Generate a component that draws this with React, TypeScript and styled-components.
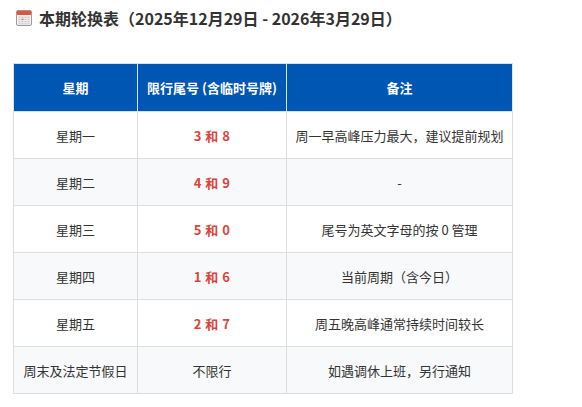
import React from "react";
import styled, { createGlobalStyle } from "styled-components";

const GlobalStyle = createGlobalStyle`
  body {
    margin: 0;
    background: #ffffff;
    font-family: "Noto Sans CJK SC", "Noto Sans", sans-serif;
    color: #333;
  }
`;

const Page = styled.div`
  width: 582px;
  height: 407px;
  padding: 7px 0 0 13px;
  box-sizing: border-box;
`;

const Heading = styled.h3`
  display: flex;
  align-items: center;
  gap: 7px;
  margin: 0 0 34px 3px;
  font-size: 16px;
  font-weight: 700;
  color: #333;
  line-height: 22px;
`;

const Table = styled.table`
  width: 499px;
  border-collapse: collapse;
  font-size: 13px;
  table-layout: fixed;
`;

const HeadCell = styled.th`
  background: #0056b3;
  color: #fff;
  font-weight: 700;
  height: 47px;
  padding: 0;
  border: 1px solid #cfe3f5;
  text-align: center;
`;

const Row = styled.tr<{ $alt: boolean }>`
  background: ${(p) => (p.$alt ? "#f8f9fa" : "#ffffff")};
`;

const Cell = styled.td<{ $red?: boolean }>`
  height: 46px;
  padding: 0;
  border: 1px solid #dddddd;
  text-align: center;
  color: ${(p) => (p.$red ? "#d9453d" : "#333")};
  font-weight: ${(p) => (p.$red ? 700 : 400)};
  letter-spacing: ${(p) => (p.$red ? "0.5px" : "0")};
`;

const CalendarIcon = () => (
  <svg width="16" height="16" viewBox="0 0 16 16">
    <rect x="0.5" y="0.5" width="15" height="15" rx="1.5" fill="#f4f4f4" stroke="#9a9a9a" />
    <rect x="1" y="1" width="14" height="4" fill="#e4553f" />
    {[0, 1, 2, 3].map((r) =>
      [0, 1, 2, 3].map((c) => (
        <rect key={`${r}-${c}`} x={2.5 + c * 3} y={6.5 + r * 2.2} width="2" height="1.4" fill="#c8c8c8" />
      ))
    )}
    <rect x="5.5" y="8.7" width="2" height="1.4" fill="#e07a8a" />
  </svg>
);

const rows = [
  { day: "星期一", nums: "3 和 8", note: "周一早高峰压力最大，建议提前规划", red: true },
  { day: "星期二", nums: "4 和 9", note: "-", red: true },
  { day: "星期三", nums: "5 和 0", note: "尾号为英文字母的按 0 管理", red: true },
  { day: "星期四", nums: "1 和 6", note: "当前周期（含今日）", red: true },
  { day: "星期五", nums: "2 和 7", note: "周五晚高峰通常持续时间较长", red: true },
  { day: "周末及法定节假日", nums: "不限行", note: "如遇调休上班，另行通知", red: false },
];

export default function App() {
  return (
    <>
      <GlobalStyle />
      <Page>
        <Heading>
          <CalendarIcon />
          本期轮换表（2025年12月29日 - 2026年3月29日）
        </Heading>
        <Table>
          <colgroup>
            <col style={{ width: 124 }} />
            <col style={{ width: 149 }} />
            <col style={{ width: 226 }} />
          </colgroup>
          <thead>
            <tr>
              <HeadCell>星期</HeadCell>
              <HeadCell>限行尾号 (含临时号牌)</HeadCell>
              <HeadCell>备注</HeadCell>
            </tr>
          </thead>
          <tbody>
            {rows.map((r, i) => (
              <Row key={r.day} $alt={i % 2 === 1}>
                <Cell>{r.day}</Cell>
                <Cell $red={r.red}>{r.nums}</Cell>
                <Cell>{r.note}</Cell>
              </Row>
            ))}
          </tbody>
        </Table>
      </Page>
    </>
  );
}
